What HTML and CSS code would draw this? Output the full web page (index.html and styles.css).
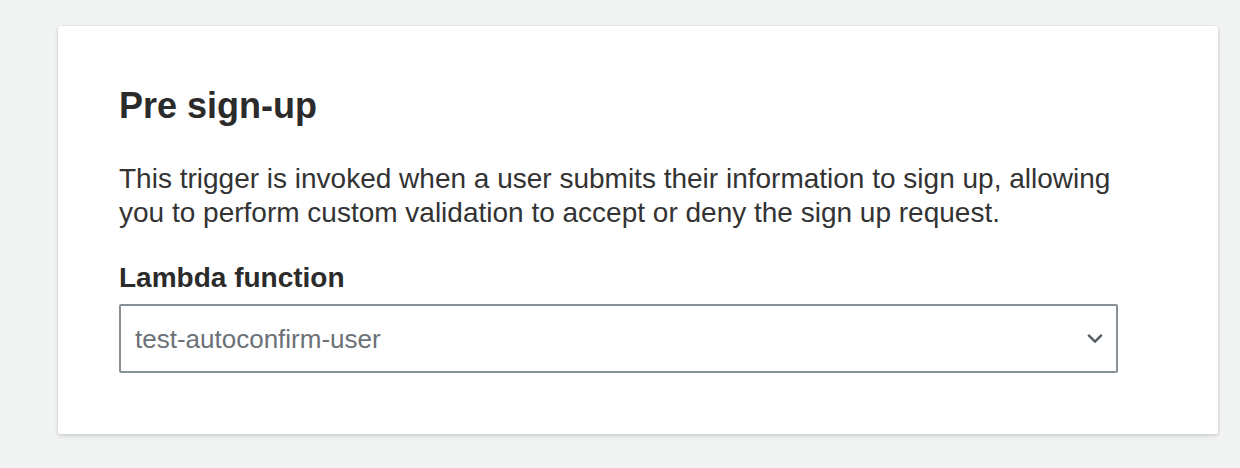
FILE: index.html
```html
<!DOCTYPE html>
<html>
<head>
<meta charset="utf-8">
<link rel="stylesheet" href="styles.css">
</head>
<body>
<div class="page">
  <div class="card">
    <h2 class="title">Pre sign-up</h2>
    <p class="desc">This trigger is invoked when a user submits their information to sign up, allowing you to perform custom validation to accept or deny the sign up request.</p>
    <div class="field">
      <label class="label">Lambda function</label>
      <div class="select">
        <span class="value">test-autoconfirm-user</span>
        <svg class="chev" width="16" height="11" viewBox="0 0 16 11"><path d="M1.2 1.8 L8 8.6 L14.8 1.8" fill="none" stroke="#545b64" stroke-width="2.4"/></svg>
      </div>
    </div>
  </div>
</div>
</body>
</html>
```
FILE: styles.css
```css
html, body { margin: 0; padding: 0; }
body {
  background: #f2f3f3;
  font-family: "Liberation Sans", Arial, sans-serif;
  color: #333;
  width: 1240px;
  height: 468px;
  overflow: hidden;
}
.page {
  padding: 26px 22px 0 58px;
}
.card {
  width: 1160px;
  height: 408px;
  box-sizing: border-box;
  background: #fff;
  border-radius: 2px;
  box-shadow: 0 2px 4px rgba(0,28,36,0.15), 0 0 2px rgba(0,28,36,0.12);
  padding: 58px 61px 0 61px;
}
.title {
  margin: 0;
  font-size: 36px;
  font-weight: bold;
  line-height: 44px;
  color: #2b2b2b;
}
.desc {
  margin: 34px 0 0 0;
  max-width: 1030px;
  font-size: 28px;
  line-height: 34px;
  color: #333;
}
.field { margin-top: 31px; }
.label {
  display: block;
  font-weight: bold;
  font-size: 28px;
  line-height: 34px;
  color: #2b2b2b;
}
.select {
  margin-top: 9px;
  width: 999px;
  height: 69px;
  box-sizing: border-box;
  border: 2px solid #879196;
  border-radius: 2px;
  display: flex;
  align-items: center;
  justify-content: space-between;
  padding: 0 13px 0 14px;
}
.value {
  font-size: 26px;
  line-height: 30px;
  color: #6b7177;
}
.chev { display: block; }
```
